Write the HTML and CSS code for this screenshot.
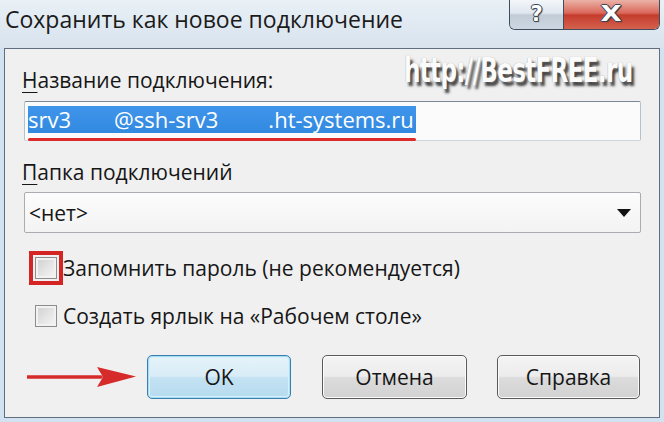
FILE: index.html
```html
<!DOCTYPE html>
<html lang="ru">
<head>
<meta charset="utf-8">
<title>Сохранить как новое подключение</title>
<link rel="stylesheet" href="styles.css">
</head>
<body>
<div class="window">
  <div class="titlebar">
    <div class="title">Сохранить как новое подключение</div>
    <div class="caption-btns">
      <div class="cap-btn help"><span>?</span></div>
      <div class="cap-btn close"><span>X</span></div>
    </div>
  </div>
  <div class="panel">
    <div class="watermark">http://BestFREE.ru</div>
    <div class="label"><u>Н</u>азвание подключения:</div>
    <div class="field">
      <span class="sel"><span>srv3</span><span class="part2">@ssh-srv3</span><span class="part3">.ht-systems.ru</span></span>
      <span class="mark-line"></span>
    </div>
    <div class="label label-folder"><u>П</u>апка подключений</div>
    <div class="combo"><span class="combo-text">&lt;нет&gt;</span><span class="combo-arrow"></span></div>
    <div class="check-row row1"><span class="checkbox marked"></span><span class="check-label">Запомнить пароль (не рекомендуется)</span></div>
    <div class="check-row row2"><span class="checkbox"></span><span class="check-label">Создать ярлык на «Рабочем столе»</span></div>
    <div class="buttons">
      <svg class="arrow" width="110" height="26" viewBox="0 0 110 26">
        <line x1="0" y1="13" x2="74" y2="13" stroke="#d62b2b" stroke-width="3.5" stroke-linecap="round"/>
        <polygon points="70,3 109,12.5 70,23 76,13" fill="#d62b2b"/>
      </svg>
      <div class="btn btn-default btn-ok">OK</div>
      <div class="btn btn-cancel">Отмена</div>
      <div class="btn btn-help">Справка</div>
    </div>
  </div>
</div>
</body>
</html>
```

FILE: styles.css
```css
html, body {
  margin: 0;
  padding: 0;
}
body {
  width: 664px;
  height: 422px;
  overflow: hidden;
  background: #d3e2f0;
  font-family: "Open Sans", "Noto Sans", sans-serif;
  color: #161616;
}
.window {
  display: flex;
  flex-direction: column;
  height: 422px;
}
.titlebar {
  flex: none;
  height: 48px;
  display: flex;
  align-items: flex-start;
  background: linear-gradient(#e9f0f6, #d8e3ee);
}
.title {
  margin: 3px 0 0 5px;
  font-size: 23px;
  line-height: 33px;
  color: #1b1b1b;
}
.caption-btns {
  margin-left: auto;
  margin-right: 4px;
  display: flex;
  height: 29px;
  border: 1px solid #3f4d5c;
  border-top: none;
  border-radius: 0 0 6px 6px;
  overflow: hidden;
}
.cap-btn {
  display: flex;
  align-items: center;
  justify-content: center;
  height: 100%;
}
.cap-btn span {
  color: #fff;
  font-family: "DejaVu Sans", sans-serif;
  font-weight: bold;
  text-shadow: 1px 0 0 #3a4654, -1px 0 0 #3a4654, 0 1px 0 #3a4654, 0 -1px 0 #3a4654, 1px 1px 1px #2a3440;
}
.help {
  width: 53px;
  border-right: 1px solid #3f4d5c;
  background: linear-gradient(#f3f6f9 0%, #dfe6ee 45%, #c2ccd7 52%, #cdd7e2 100%);
}
.help span {
  font-size: 21px;
  line-height: 1;
}
.close {
  width: 95px;
  background: linear-gradient(#ebb2a6 0%, #d9675a 45%, #c53c2c 52%, #d4614e 100%);
}
.close span {
  font-size: 21px;
  line-height: 1;
  transform: scaleX(1.3);
}
.panel {
  position: relative;
  flex: none;
  box-sizing: border-box;
  width: 656px;
  height: 370px;
  margin: 0 4px;
  border: 1px solid #5f6f7f;
  background: #f0f0f0;
  padding: 16px 18px 0 17px;
  font-size: 21px;
}
.watermark {
  position: absolute;
  left: 399px;
  top: 2px;
  font-family: "DejaVu Sans", sans-serif;
  font-weight: bold;
  font-size: 33px;
  line-height: 40px;
  letter-spacing: -1px;
  color: #fbfbfb;
  transform: scaleX(0.7);
  transform-origin: left top;
  text-shadow: 4px 4px 3px rgba(50, 50, 50, 0.9), 0 0 1px #9a9a9a;
  white-space: nowrap;
}
.label {
  line-height: 30px;
  height: 30px;
}
.label u {
  text-decoration-thickness: 1px;
  text-underline-offset: 4px;
}
.field {
  position: relative;
  box-sizing: border-box;
  height: 40px;
  margin: 6px 0 0 2px;
  padding: 4px 3px;
  border: 1px solid;
  border-color: #7c8894 #b8c1ca #cfd5dc #b8c1ca;
  border-radius: 2px;
  background: #fbfbfb;
}
.sel {
  display: inline-block;
  height: 27px;
  line-height: 27px;
  font-size: 22px;
  padding-right: 2px;
  background: linear-gradient(#3f95ea, #3189e0);
  color: #fff;
  white-space: nowrap;
}
.part2 {
  margin-left: 43px;
}
.part3 {
  margin-left: 50px;
}
.mark-line {
  position: absolute;
  left: 3px;
  top: 36px;
  width: 388px;
  height: 3px;
  border-radius: 2px;
  background: #dd2a2a;
}
.label-folder {
  margin-top: 16px;
}
.combo {
  box-sizing: border-box;
  height: 41px;
  margin: 5px 0 0 2px;
  padding: 1px 9px 0 4px;
  display: flex;
  align-items: center;
  border: 1px solid #a9adb2;
  border-radius: 2px;
  background: linear-gradient(#fcfcfc, #f3f3f3);
}
.combo-text {
  line-height: 33px;
}
.combo-arrow {
  margin-left: auto;
  width: 0;
  height: 0;
  border-left: 7px solid transparent;
  border-right: 7px solid transparent;
  border-top: 8px solid #111;
}
.check-row {
  display: flex;
  align-items: center;
  height: 30px;
  padding-left: 13px;
}
.row1 {
  margin-top: 20px;
}
.row2 {
  margin-top: 18px;
}
.checkbox {
  box-sizing: border-box;
  width: 22px;
  height: 22px;
  border: 1px solid #8d8d8d;
  background: linear-gradient(135deg, #cfcfcf, #f7f7f7);
  box-shadow: inset 0 0 0 2px #f2f2f2;
  flex: none;
}
.checkbox.marked {
  outline: 4px solid #d42424;
  outline-offset: 2px;
}
.check-label {
  margin-left: 6px;
  line-height: 30px;
  white-space: nowrap;
}
.buttons {
  display: flex;
  align-items: center;
  margin-top: 24px;
  height: 44px;
}
.arrow {
  margin-left: 5px;
  margin-right: auto;
  flex: none;
}
.btn {
  box-sizing: border-box;
  height: 44px;
  display: flex;
  align-items: center;
  justify-content: center;
  border: 1px solid #5a5a5a;
  border-radius: 5px;
  background: linear-gradient(#f4f4f4 0%, #ececec 48%, #dcdcdc 52%, #d2d2d2 100%);
  box-shadow: inset 0 0 0 1px #fbfbfb;
  flex: none;
}
.btn-default {
  border-color: #3a7fae;
  background: linear-gradient(#e6f3fa 0%, #d8ecf7 48%, #c3e2f2 52%, #b6dbef 100%);
  box-shadow: inset 0 0 0 1px #a6dcf4, inset 0 0 0 2px #d8f0fb;
}
.btn-ok {
  width: 144px;
}
.btn-cancel {
  width: 145px;
  margin-left: 31px;
}
.btn-help {
  width: 143px;
  margin-left: 30px;
  margin-right: 1px;
}
```
